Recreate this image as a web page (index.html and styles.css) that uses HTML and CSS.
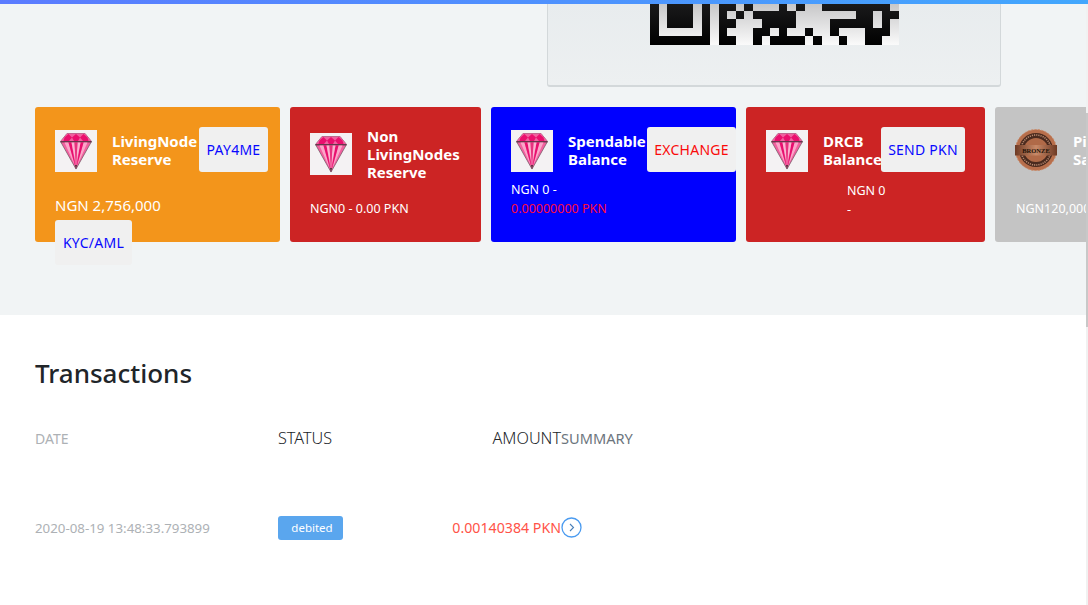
FILE: index.html
```html
<!DOCTYPE html>
<html lang="en">
<head>
<meta charset="utf-8">
<title>Dashboard</title>
<link rel="stylesheet" href="styles.css">
</head>
<body>
<svg class="defs" width="0" height="0" aria-hidden="true">
  <defs>
    <symbol id="gem" viewBox="0 0 42 42">
      <rect width="42" height="42" fill="#f4f2f3"/>
      <path d="M12 3.500H30L36.500 11.500L21 39L5.500 11.500Z" fill="#f2609f" stroke="#7a5a68" stroke-width=".8"/>
      <path d="M12 3.500H30L36.500 11.500H5.500Z" fill="#f0609f"/>
      <path d="M13.500 4L17 7.500L14 11H8.500L9.500 7.500ZM21 4L25 7.500L23 11H19L17 7.500ZM28.500 4L32.500 7.500L33.500 11H28L25 7.500Z" fill="#ea0f6e"/>
      <path d="M5.500 11.800H36.500" stroke="#3a2a30" stroke-width="1.100"/>
      <path d="M9.500 12.500H13.500L19.500 35ZM32.500 12.500H28.500L22.500 35Z" fill="#fba6c9"/>
      <path d="M13.500 12.500H16.500L20.500 37ZM28.500 12.500H25.500L21.500 37Z" fill="#e80e6e"/>
      <path d="M16.500 12.500H19.500L20.800 34ZM25.500 12.500H22.500L21.200 34Z" fill="#fbb4d0"/>
      <path d="M19.500 12.500H22.500L21 37Z" fill="#e8327f"/>
      <path d="M20 35L21 39.500L22 35Z" fill="#4c3038"/>
    </symbol>
    <linearGradient id="bandfill" x1="0" x2="1" y1="0" y2="0">
      <stop offset="0" stop-color="#6e3a24"/>
      <stop offset=".5" stop-color="#c98a68"/>
      <stop offset="1" stop-color="#6e3a24"/>
    </linearGradient>
  </defs>
</svg>
<div class="topbar"></div>
<section class="upper">
  <div class="qr-row">
    <div class="qr-panel">
      <div class="qr-wrap">
        <svg class="qr" viewBox="0 24 29 5" preserveAspectRatio="none" shape-rendering="crispEdges" aria-label="QR code">
          <rect x="0" y="24" width="29" height="5" fill="#fff"/>
          <g fill="#000">
            <path d="M0 24h1v5H0zM6 24h1v5H6zM0 28h7v1H0zM2 24h3v3H2z"/>
            <path d="M8 24h2v1H8zM11 24h1v1h-1zM15 24h1v1h-1zM17 24h1v1h-1zM20 24h8v1h-8z"/>
            <path d="M8 25h1v1H8zM10 25h1v1h-1zM12 25h5v1h-5zM24 25h2v1h-2zM27 25h2v1h-2z"/>
            <path d="M8 26h2v1H8zM13 26h4v1h-4zM21 26h2v1h-2zM23 26h3v1h-3zM27 26h1v1h-1z"/>
            <path d="M8 27h1v1H8zM12 27h2v1h-2zM15 27h1v1h-1zM18 27h1v1h-1zM21 27h1v1h-1zM25 27h3v1h-3z"/>
            <path d="M8 28h2v1H8zM12 28h1v1h-1zM14 28h4v1h-4zM19 28h1v1h-1zM22 28h1v1h-1zM25 28h2v1h-2z"/>
          </g>
        </svg>
      </div>
    </div>
  </div>
  <div class="cards">
    <article class="card card-orange card-w1">
      <div class="card-head">
        <svg class="thumb"><use href="#gem"/></svg>
        <h4 class="card-title">LivingNode Reserve</h4>
        <a class="btn btn-blue btn-pay">PAY4ME</a>
      </div>
      <p class="value-lg">NGN 2,756,000</p>
      <a class="btn btn-blue btn-kyc">KYC/AML</a>
    </article>
    <article class="card card-red card-w2">
      <div class="card-head head-mid">
        <svg class="thumb"><use href="#gem"/></svg>
        <h4 class="card-title title-narrow">Non LivingNodes Reserve</h4>
      </div>
      <p class="value-sm value-nl">NGN0 - 0.00 PKN</p>
    </article>
    <article class="card card-blue card-w1">
      <div class="card-head">
        <svg class="thumb"><use href="#gem"/></svg>
        <h4 class="card-title">Spendable Balance</h4>
        <a class="btn btn-red btn-ex">EXCHANGE</a>
      </div>
      <p class="value-sm value-sp">NGN 0 -</p>
      <p class="value-sm value-pink">0.00000000 PKN</p>
    </article>
    <article class="card card-red card-w3">
      <div class="card-head">
        <svg class="thumb"><use href="#gem"/></svg>
        <h4 class="card-title">DRCB Balance</h4>
        <a class="btn btn-blue btn-send">SEND PKN</a>
      </div>
      <p class="value-sm value-in">NGN 0</p>
      <p class="value-sm value-in">-</p>
    </article>
    <article class="card card-gray card-w4">
      <div class="card-head">
        <svg class="badge" viewBox="0 0 42 42" aria-label="Bronze badge">
          <circle cx="21" cy="21" r="20.500" fill="#b86f4c" stroke="#c98a68" stroke-width="1" stroke-dasharray="2 1.500"/>
          <circle cx="21" cy="21" r="17" fill="#4a2a1e"/>
          <circle cx="21" cy="21" r="15" fill="none" stroke="#b98a70" stroke-width="1.600" stroke-dasharray="1.200 1"/>
          <circle cx="21" cy="21" r="12" fill="#b06a48"/>
          <rect x="0" y="16" width="42" height="10.500" fill="url(#bandfill)"/>
          <text class="badge-text" x="21" y="23.500">BRONZE</text>
        </svg>
        <h4 class="card-title title-gray">Pioneer Sales</h4>
      </div>
      <p class="value-sm value-gray">NGN120,000NGN</p>
    </article>
  </div>
</section>
<section class="lower">
  <h2 class="lower-title">Transactions</h2>
  <div class="tx-row tx-head">
    <div class="c-date muted">DATE</div>
    <div class="c-status head-wide">STATUS</div>
    <div class="c-amount head-wide">AMOUNT</div>
    <div class="c-summary head-summary">SUMMARY</div>
  </div>
  <div class="tx-row tx-body">
    <div class="c-date muted date-val">2020-08-19 13:48:33.793899</div>
    <div class="c-status"><span class="pill">debited</span></div>
    <div class="c-amount amount-val">0.00140384 PKN</div>
    <div class="c-summary">
      <svg class="chev" viewBox="0 0 21 21" width="21" height="21" aria-label="Open">
        <circle cx="10.500" cy="10.500" r="9.500" fill="none" stroke="#4a9bf0" stroke-width="1.300"/>
        <path d="M9 7l3.500 3.500L9 14" fill="none" stroke="#4a7fb8" stroke-width="1.100"/>
      </svg>
    </div>
  </div>
</section>
<div class="scroll-track"><div class="scroll-thumb"></div></div>
</body>
</html>
```

FILE: styles.css
```css
* { box-sizing: border-box; }
html, body { margin: 0; padding: 0; height: 605px; overflow: hidden; }
body {
  font-family: "Noto Sans", "Open Sans", sans-serif;
  background: #fff;
  color: #212529;
  position: relative;
}
.defs { position: absolute; }
.topbar {
  height: 4px;
  background: linear-gradient(90deg, #5b7bff, #42a7fd);
  position: relative;
  z-index: 2;
}
.upper {
  height: 311px;
  background: #f1f4f5;
  overflow: hidden;
}
.qr-row { display: flex; padding-left: 547px; }
.qr-panel {
  width: 454px;
  height: 83px;
  background: linear-gradient(180deg, #e8ecee, #edf0f1);
  border: 1px solid #d3d8da;
  border-top: 0;
  border-bottom-width: 2px;
  border-radius: 0 0 3px 3px;
  padding-left: 102px;
}
.qr-wrap { position: relative; width: 249px; height: 41px; overflow: hidden; }
.qr { display: block; width: 249px; height: 42.700px; margin-top: -2px; }
.qr-wrap::after {
  content: "";
  position: absolute;
  inset: 0;
  background: linear-gradient(180deg, rgba(80,80,84,.32), rgba(20,20,20,.02));
}
.cards {
  display: flex;
  gap: 10px;
  margin-top: 20px;
  padding-left: 35px;
  width: 1200px;
}
.card {
  position: relative;
  height: 135px;
  flex: none;
  border-radius: 3px;
  color: #fff;
  padding: 20px;
}
.card-w1 { width: 245px; }
.card-w2 { width: 191px; }
.card-w3 { width: 239px; }
.card-w4 { width: 200px; }
.card-orange { background: #f3951b; }
.card-red { background: #cc2424; }
.card-blue { background: #0000ff; }
.card-gray { background: #c4c4c4; }
.card-head { display: flex; align-items: flex-start; height: 45px; }
.head-mid { height: 63px; }
.thumb { width: 42px; height: 42px; flex: none; margin-top: 3px; }
.badge { width: 42px; height: 42px; flex: none; margin-top: 2px; }
.head-mid .thumb { margin-top: 6px; }
.card-title {
  margin: 0 0 0 15px;
  width: min-content;
  font-size: 15px;
  line-height: 18px;
  font-weight: 700;
  color: #fff;
  padding-top: 5px;
}
.title-narrow { padding-top: 0; width: 100px; }
.title-gray { margin-left: 16px; }
.btn {
  position: absolute;
  display: flex;
  align-items: center;
  justify-content: center;
  height: 45px;
  border-radius: 3px;
  background: #f0f0f0;
  font-size: 14px;
  letter-spacing: .25px;
}
.btn-blue { color: #0808ff; }
.btn-red { color: #fa0a0a; }
.btn-pay { top: 20px; left: 164px; width: 69px; }
.btn-ex { top: 20px; left: 156px; width: 89px; }
.btn-send { top: 20px; left: 135px; width: 84px; }
.btn-kyc { top: 113px; left: 20px; width: 77px; }
.value-lg, .value-sm { margin: 0; }
.value-lg { font-size: 15px; line-height: 20px; margin-top: 23px; }
.value-sm { font-size: 12.500px; line-height: 20px; }
.value-nl { margin-top: 9px; }
.value-sp { margin-top: 8px; }
.value-pink { color: #ff0a3c; margin-top: -1px; }
.value-in { padding-left: 81px; margin-top: 9px; }
.value-in + .value-in { margin-top: -1px; }
.value-gray { margin-top: 27px; padding-left: 1px; white-space: nowrap; }
.badge-text {
  font-family: "Liberation Serif", serif;
  font-size: 6.500px;
  font-weight: 700;
  fill: #1d1208;
  text-anchor: middle;
}
.lower { padding: 0 35px; }
.lower-title {
  margin: 0;
  padding-top: 41px;
  font-size: 26px;
  line-height: 34px;
  font-weight: 500;
  color: #212529;
}
.tx-row { display: flex; align-items: center; font-size: 14px; }
.tx-head { margin-top: 38px; height: 20px; }
.tx-body { margin-top: 69px; height: 21px; }
.c-date { width: 243px; }
.c-status { width: 174px; }
.c-amount { width: 109px; text-align: right; white-space: nowrap; }
.c-summary { color: #6c757d; display: flex; align-items: center; }
.head-wide { font-size: 16.200px; font-weight: 300; }
.head-summary { font-size: 14.600px; }
.muted { color: #adb1b5; }
.date-val { font-size: 13.300px; padding-top: 1px; }
.amount-val { color: #ff5348; font-size: 14.200px; }
.pill {
  display: inline-block;
  background: #5aa6ee;
  color: #fff;
  font-size: 11.500px;
  line-height: 24px;
  height: 24px;
  width: 65px;
  padding-left: 3px;
  text-align: center;
  border-radius: 3px;
}
.chev { display: block; }
.scroll-track {
  position: absolute;
  top: 0;
  right: 0;
  bottom: 0;
  width: 2px;
  background: #f1f1f1;
}
.scroll-thumb {
  position: absolute;
  top: 113px;
  left: 0;
  width: 2px;
  height: 214px;
  background: #c8c8c8;
}
```
